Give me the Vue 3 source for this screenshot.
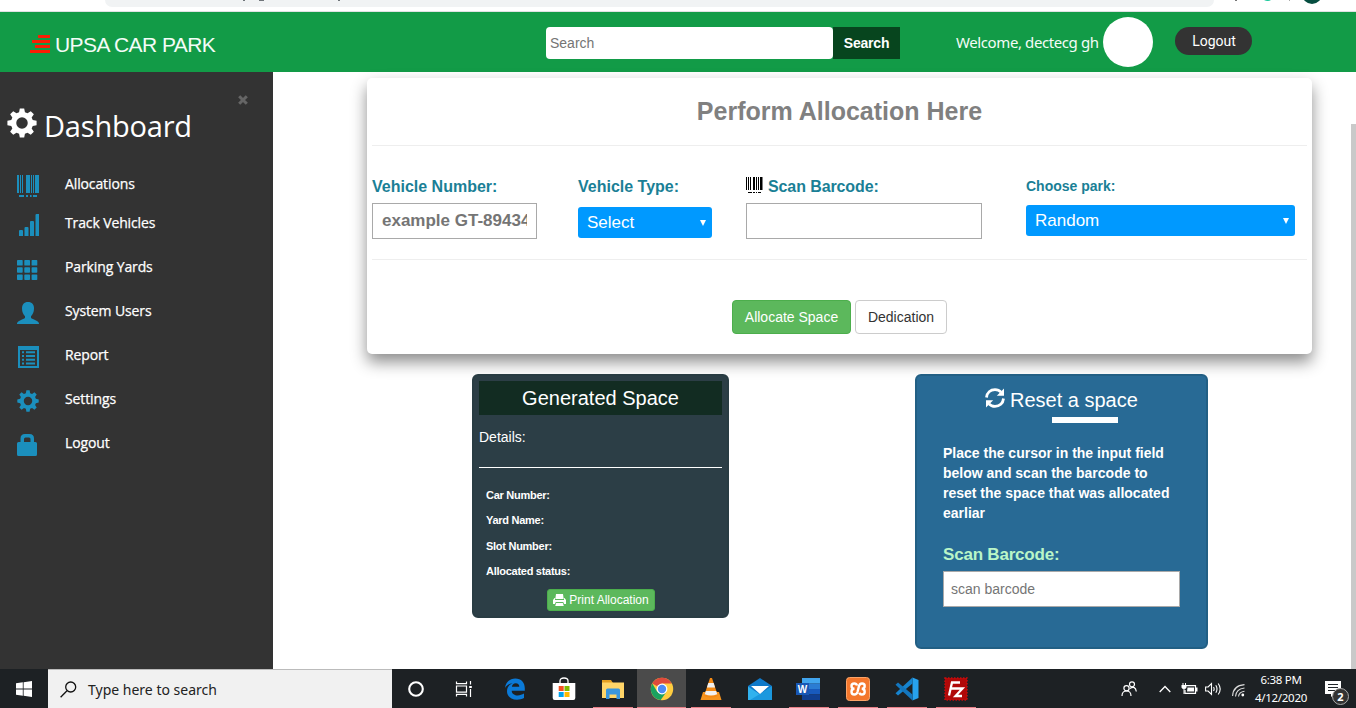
<script setup>
// Builds a closed outline for a toothed wheel with a round hub.
function gear(teeth, outer, inner, hub) {
  const pts = []
  const step = (Math.PI * 2) / teeth
  for (let i = 0; i < teeth; i++) {
    const a = i * step - Math.PI / 2
    for (const [off, r] of [[-0.34, inner], [-0.19, outer], [0.19, outer], [0.34, inner]]) {
      const t = a + off * step
      pts.push(`${(12 + r * Math.cos(t)).toFixed(2)} ${(12 + r * Math.sin(t)).toFixed(2)}`)
    }
  }
  return `M${pts.join('L')}Z M${12 - hub} 12a${hub} ${hub} 0 1 0 ${hub * 2} 0a${hub} ${hub} 0 1 0 ${-hub * 2} 0Z`
}
const gearPath = gear(8, 11.8, 8.9, 4.6)
const barcodePath =
  'M0 0h2v18H0zM3 0h1v18H3zM5 0h1v18H5zM9 0h4v18H9zM14 0h1v18h-1zM16 0h1v18h-1zM18 0h4v18h-4zM2 20h5v2H2zM9 20h2v2H9zM13 20h1.6v2H13zM16 20h4v2h-4z'

const items = [
  { label: 'Allocations', icon: 'barcode' },
  { label: 'Track Vehicles', icon: 'signal' },
  { label: 'Parking Yards', icon: 'grid' },
  { label: 'System Users', icon: 'user' },
  { label: 'Report', icon: 'list' },
  { label: 'Settings', icon: 'gear' },
  { label: 'Logout', icon: 'lock' }
]
const details = ['Car Number:', 'Yard Name:', 'Slot Number:', 'Allocated status:']
</script>

<template>
  <div class="screen">
    <div class="chrome">
      <div class="urlbar"><i class="desc a"></i><i class="desc b"></i><i class="desc c"></i></div>
      <svg class="ext" width="142" height="11" viewBox="0 0 142 11">
        <path d="M21 0h2v1h-2z" fill="#777" />
        <path d="M50 0h7q-3 2-7 0z" fill="#16c79a" />
        <path d="M75 0h1v1h-1z" fill="#aaa" />
        <circle cx="98" cy="-6" r="10" fill="#064e40" />
      </svg>
    </div>

    <header class="topbar">
      <svg class="bars" width="20" height="18" viewBox="0 0 20 18">
        <path d="M8 0h12v3H8zM2 5h18v3H2zM5 10h15v3H5zM0 15h20v3H0z" fill="#fb1d04" />
      </svg>
      <span class="brand">UPSA CAR PARK</span>
      <input class="search" placeholder="Search" />
      <button class="go">Search</button>
      <span class="welcome">Welcome, dectecg gh</span>
      <span class="avatar"></span>
      <button class="out">Logout</button>
    </header>

    <div class="body">
      <aside class="side">
        <svg class="close" width="10" height="10" viewBox="0 0 10 10">
          <path d="M1.200 1.200l7.600 7.600M8.800 1.200L1.200 8.800" stroke="#666" stroke-width="3" />
        </svg>
        <div class="dash">
          <svg width="30" height="30" viewBox="0 0 24 24"><path :d="gearPath" fill="#fff" fill-rule="evenodd" /></svg>
          <span>Dashboard</span>
        </div>
        <nav>
          <a v-for="it in items" :key="it.icon" :class="['item', it.icon]">
            <svg width="22" height="22" viewBox="0 0 22 22" fill="#1b8fbd">
              <path v-if="it.icon === 'barcode'" :d="barcodePath" />
              <path v-else-if="it.icon === 'signal'" d="M2 17q0-1 1-1h2q1 0 1 1v5H2zM7.500 14q0-1 1-1h2q1 0 1 1v8h-4zM13 8q0-1 1-1h2q1 0 1 1v14h-4zM18.500 1q0-1 1-1H22v22h-3.500z" />
              <g v-else-if="it.icon === 'grid'">
                <rect v-for="n in 9" :key="n" :x="((n - 1) % 3) * 7.3" :y="Math.floor((n - 1) / 3) * 7.2" width="5.700" height="5.600" rx=".7" />
              </g>
              <path v-else-if="it.icon === 'user'" d="M11 0c4 0 6 2.500 6 6.500 0 3.500-1.300 6-3 7.700v1.500c0 1.300 8 2.600 8 6V22H0v-.5c0-3.200 8-4.500 8-5.800v-1.500C6.300 12.500 5 10 5 6.500 5 2.500 7 0 11 0z" />
              <path v-else-if="it.icon === 'list'" fill-rule="evenodd" d="M1 0h21v22H1zM3 4v16h17V4zM5 5.300h2v2H5zM9 5.300h9v2H9zM5 9h2v2H5zM9 9h9v2H9zM5 12.700h2v2H5zM9 12.700h9v2H9zM5 16.400h2v2H5zM9 16.400h9v2H9z" />
              <path v-else-if="it.icon === 'gear'" :d="gearPath" transform="scale(.917)" fill-rule="evenodd" />
              <path v-else fill-rule="evenodd" d="M3.500 8V4.500Q3.500 0 8 0h4.500Q17 0 17 4.500V8h1.500Q20 8 20 9.500v11q0 1.500-1.500 1.500h-17Q0 22 0 20.500v-11Q0 8 1.500 8zM7 8h6.500V5q0-1.500-1.500-1.500H8.500Q7 3.500 7 5z" />
            </svg>
            <span>{{ it.label }}</span>
          </a>
        </nav>
      </aside>

      <main class="main">
        <section class="alloc">
          <h2>Perform Allocation Here</h2>
          <div class="fields">
            <div class="field f1">
              <label>Vehicle Number:</label>
              <input class="plain bold" placeholder="example GT-89434" />
            </div>
            <div class="field f2">
              <label>Vehicle Type:</label>
              <div class="select"><span>Select</span><i></i></div>
            </div>
            <div class="field f3">
              <label>
                <svg width="17" height="16" viewBox="0 0 17 16"><path d="M0 0h1v13H0zM2 0h1v13H2zM4 0h1v13H4zM7 0h2v13H7zM10 0h1v13h-1zM12 0h1v13h-1zM14 0h2.500v13H14zM2 15h4v1H2zM7 15h2v1H7zM10 15h1v1h-1zM12 15h3v1h-3z" /></svg>
                <span>Scan Barcode:</span>
              </label>
              <input class="plain" />
            </div>
            <div class="field f4">
              <label>Choose park:</label>
              <div class="select"><span>Random</span><i></i></div>
            </div>
          </div>
          <div class="actions">
            <button class="btn green">Allocate Space</button>
            <button class="btn white">Dedication</button>
          </div>
        </section>

        <div class="panels">
          <section class="gen">
            <h3>Generated Space</h3>
            <p class="details">Details:</p>
            <ul><li v-for="d in details" :key="d">{{ d }}</li></ul>
            <button class="print">
              <svg width="13" height="12" viewBox="0 0 13 12"><path fill="#fff" fill-rule="evenodd" d="M3 0h7l.7 5H2.300zM0 6l1.500-2H2v2h9V4h.5L13 6v4h-2L10.300 8H2.700L2 10H0zM3.200 9h6.600l1 3H2.200z" /></svg>
              <span>Print Allocation</span>
            </button>
          </section>

          <section class="reset">
            <div class="rtitle">
              <svg width="20" height="20" viewBox="0 0 20 20">
                <path d="M1.500 9.500C2 4.500 5.500 1.600 10 1.600c2.600 0 4.600 1 6 2.600M18.500 10.500c-.5 5-4 7.900-8.500 7.900-2.600 0-4.600-1-6-2.600" fill="none" stroke="#fff" stroke-width="2.800" />
                <path d="M19 .5v7.200h-7.200zM1 19.500v-7.200h7.200z" fill="#fff" />
              </svg>
              <span>Reset a space</span>
            </div>
            <div class="rule"></div>
            <p>Place the cursor in the input field<br />below and scan the barcode to<br />reset the space that was allocated<br />earliar</p>
            <label>Scan Barcode:</label>
            <input class="plain" placeholder="scan barcode" />
          </section>
        </div>
        <div class="scroll"></div>
      </main>
    </div>

    <footer class="task">
      <div class="start">
        <svg width="16" height="16" viewBox="0 0 16 16" fill="#fff"><path d="M0 2.300l6.800-1v6.200H0zM7.600 1.200L16 0v7.500H7.600zM0 8.400h6.800v6.300L0 13.700zM7.600 8.400H16V16l-8.400-1.200z" /></svg>
      </div>
      <div class="tsearch">
        <svg width="17" height="17" viewBox="0 0 17 17" fill="none" stroke="#111" stroke-width="1.300"><circle cx="10.700" cy="6" r="5" /><path d="M7 9.800L.6 16.200" /></svg>
        <span>Type here to search</span>
      </div>
      <div class="apps">
        <div class="app">
          <svg class="nudge" width="18" height="18" viewBox="0 0 18 18"><circle cx="9" cy="9" r="6.800" fill="none" stroke="#fff" stroke-width="2.100" /></svg>
        </div>
        <div class="app">
          <svg class="nudge2" width="18" height="18" viewBox="0 0 18 18" fill="none" stroke="#fff" stroke-width="1.200"><path d="M1.500 1.500v2.200h10V1.500M1.500 16.500v-2.200h10v2.200M1.500 6h10v6.200h-10zM15.500 1v3.500M15.500 9v8" /><path d="M14.200 6h2.600v2h-2.600z" fill="#fff" stroke="none" /></svg>
        </div>
        <div class="app">
          <svg width="22" height="22" viewBox="0 0 22 22"><path fill="#0b7ad8" d="M1 10C1.700 3.800 6 .4 11.300.4c6 0 9.500 4.100 9.500 9.800v2.500H7.700c.2 3.300 3 4.700 6 4.700 2.300 0 4.400-.6 6.300-1.800v4.500c-2.100 1.100-4.500 1.600-7 1.600C6.900 21.700 3 18.200 3 13.200c0-3.800 2-6.600 5.600-8C5 5.500 2.700 7.300 1 10zm6.900-1.200h7.400c0-2.300-1.300-3.600-3.500-3.600S8.200 6.500 7.900 8.800z" /></svg>
        </div>
        <div class="app">
          <svg width="24" height="24" viewBox="0 0 24 24"><path d="M8 7V4q0-3 4-3t4 3v3" fill="none" stroke="#fff" stroke-width="1.300" /><path d="M.7 6h22.600v15q0 2-2 2H2.700q-2 0-2-2z" fill="#fff" /><path d="M6.700 9h5v5h-5z" fill="#f25022" /><path d="M12.500 9h5v5h-5z" fill="#7fba00" /><path d="M6.700 15h5v5h-5z" fill="#00a4ef" /><path d="M12.500 15h5v5h-5z" fill="#ffb900" /></svg>
        </div>
        <div class="app open">
          <svg width="24" height="22" viewBox="0 0 24 22"><path d="M1 2h9l2 3H1z" fill="#e5a021" /><path d="M1 4.500h22V20H1z" fill="#ffd568" /><path d="M5 12q0-1.500 1.500-1.500h11Q19 10.500 19 12v9h-3.500v-4.500h-7V21H5z" fill="#3a96dd" /></svg>
        </div>
        <div class="app active">
          <svg width="24" height="24" viewBox="0 0 24 24"><circle cx="12" cy="12" r="11.200" fill="#ffcd40" /><path d="M12 12L2.300 6.400A11.200 11.200 0 0 1 21.700 6.400H12z" fill="#df4a3c" /><path d="M2.300 6.400A11.200 11.200 0 0 0 10.700 23.100L16.500 14.700 7.200 14.700z" fill="#1aa260" /><circle cx="12" cy="12" r="5.400" fill="#fff" /><circle cx="12" cy="12" r="4.200" fill="#4c8bf5" /></svg>
        </div>
        <div class="app open">
          <svg width="22" height="24" viewBox="0 0 22 24"><path d="M3 15h16l2.500 8H.5z" fill="#f7941d" /><path d="M10 1h2l6 18q-7 3-14 0z" fill="#f58a14" /><path d="M8.300 6h5.400l1.400 4.500H6.900zM5.800 14h10.400l1 3.200q-6.200 2.500-12.400 0z" fill="#f1f1f1" /></svg>
        </div>
        <div class="app">
          <svg width="26" height="24" viewBox="0 0 26 24"><path d="M1 9L13 1l12 8v14H1z" fill="#0f79c9" /><path d="M1 9.500l12 8 12-8V23H1z" fill="#31b2ee" /><path d="M3 23L25 9.500V23z" fill="#1b98de" /><path d="M4 9h18l-9 8z" fill="#fff" /></svg>
        </div>
        <div class="app open">
          <svg width="25" height="22" viewBox="0 0 25 22"><path d="M6 0h18v5.600H6z" fill="#41a5ee" /><path d="M6 5.500h18V11H6z" fill="#2b7cd3" /><path d="M6 11h18v5.500H6z" fill="#185abd" /><path d="M6 16.500h18V22H6z" fill="#103f91" /><path d="M0 5h13v12H0z" fill="#1857b4" /><text x="6.500" y="14.500" text-anchor="middle" class="w">W</text></svg>
        </div>
        <div class="app open">
          <svg width="24" height="24" viewBox="0 0 24 24"><rect x=".5" y=".5" width="23" height="23" rx="3" fill="#f4772c" stroke="#fca469" /><path d="M11 8.500Q10.500 6.500 8.300 6.500 5.500 6.500 5.500 9q0 2.800 3 2.800-3 0-3 2.900 0 2.800 2.800 2.800 2.400 0 3.200-2.500l1.500-6q.7-2.500 3-2.500 2.700 0 2.700 2.500 0 2.800-3 2.800 3 0 3 2.900 0 2.800-2.900 2.800-1.800 0-2.500-1.800" fill="none" stroke="#fff" stroke-width="2.400" /></svg>
        </div>
        <div class="app open">
          <svg width="24" height="24" viewBox="0 0 24 24"><path d="M17.500.5L23.500 3v18l-6 2.500z" fill="#27a2ee" /><path d="M17.500.5v6L3 18.500.5 16.300z" fill="#1684cf" /><path d="M17.500 23.500v-6L3 5.500.5 7.700z" fill="#1376be" /></svg>
        </div>
        <div class="app open">
          <svg width="24" height="24" viewBox="0 0 24 24"><rect x="1" y="1" width="22" height="22" fill="#b00808" stroke="#c50d0d" stroke-width="1.500" stroke-dasharray="1.500 1.500" /><path d="M5 18.500L8 5.500h8M6.500 11.500h5.500M12 11.500h6.500l-7 7.500h6.500" fill="none" stroke="#fff" stroke-width="2.300" /></svg>
        </div>
      </div>
      <div class="tray">
        <svg class="people" width="16" height="16" viewBox="0 0 16 16" fill="none" stroke="#fff" stroke-width="1.200"><circle cx="5.500" cy="7.300" r="2.600" /><path d="M1 15q0-5 4.500-5T10 15" /><circle cx="11" cy="3.300" r="2.500" /><path d="M8.800 7.500q5.700-3.200 6.500 3" /></svg>
        <svg class="up" width="12" height="8" viewBox="0 0 12 8" fill="none" stroke="#fff" stroke-width="1.300"><path d="M.7 7L6 1.500 11.300 7" /></svg>
        <svg class="bat" width="17" height="12" viewBox="0 0 17 12"><path d="M5 2.600h9.500v7.800H4V7" fill="none" stroke="#fff" stroke-width="1.200" /><path d="M6.500 4.500h6.500v4H6zM15 4.500h1.500v4H15zM1.500 0h1v2h-1zM4 0h1v2H4zM.5 2h5v2.500Q5 6 3 6T.5 4.500zM2.500 6h1v5h-1z" fill="#fff" /></svg>
        <svg class="vol" width="17" height="14" viewBox="0 0 17 14" fill="none" stroke="#fff" stroke-width="1.100"><path d="M.6 5h2.500L6.500 1.500v11L3.100 9H.6zM8.500 5q1.300 2 0 4M10.800 3.300q2.400 3.700 0 7.400M13.200 1.500q4 5.500 0 11" /></svg>
        <svg class="wifi" width="13" height="13" viewBox="0 0 13 13" fill="none" stroke="#ddd" stroke-width="1.100"><path d="M.6 12Q1 1.500 12.500.6M3.500 12.500Q4 5 12.500 4M6.500 12.500Q7 8 12.500 7.300" /><circle cx="10.800" cy="11" r="1.400" fill="#fff" stroke="none" /></svg>
        <div class="clock"><span>6:38 PM</span><span>4/12/2020</span></div>
        <div class="note">
          <svg width="16" height="16" viewBox="0 0 16 16"><path d="M0 0h16v13H9.500L6 16v-3H0z" fill="#fff" /><path d="M3 3.500h10M3 6.500h10M3 9.500h7" stroke="#20262a" stroke-width="1.100" /></svg>
          <b>2</b>
        </div>
      </div>
    </footer>
  </div>
</template>

<style>
body { margin: 0; overflow: hidden; }
</style>

<style scoped>
* { box-sizing: border-box; }
.screen { width: 1356px; height: 708px; display: flex; flex-direction: column; overflow: hidden; background: #fff; font: 14px "Liberation Sans", Arial, sans-serif; white-space: nowrap; }
button, input { font-family: inherit; margin: 0; border: 0; outline: 0; }
svg { display: block; flex: none; }

.chrome { height: 12px; flex: none; display: flex; border-bottom: 1px solid #dfe1e3; }
.urlbar { margin-left: 105px; width: 1109px; height: 7px; background: #f1f3f4; border-radius: 0 0 14px 14px; display: flex; }
.desc { height: 1px; background: #70757a; width: 2px; }
.desc.a { margin-left: 138px; }
.desc.b { margin-left: 14px; width: 5px; }
.desc.c { margin-left: 74px; width: 2px; }

.topbar { height: 60px; flex: none; background: #129b47; display: flex; align-items: flex-start; color: #fff; }
.bars { margin: 23px 0 0 30px; }
.brand { margin: 20px 0 0 5px; width: 491px; font: 21px/25px "Liberation Sans", Arial, sans-serif; letter-spacing: -.57px; color: #f4fcf7; }
.search { margin-top: 15px; width: 287px; height: 32px; border-radius: 4px; padding: 0 4px; font-size: 14px; background: #fff; }
.search::placeholder, .plain::placeholder { color: #757575; opacity: 1; }
.go { margin-top: 15px; width: 67px; height: 32px; background: #07451e; color: #fff; font: bold 14px "Liberation Sans", Arial, sans-serif; letter-spacing: -.2px; padding: 0; }
.welcome { margin: 20px 0 0 56px; width: 147px; font: 15px/20px "Noto Sans", sans-serif; letter-spacing: -.4px; color: #f4fcf7; }
.avatar { margin-top: 5px; width: 50px; height: 50px; border-radius: 50%; background: #fff; }
.out { margin: 15px 0 0 22px; width: 77px; height: 28px; border-radius: 14px; background: #333; color: #fff; font: 14px Roboto, sans-serif; padding: 0 0 0 1px; }

.body { height: 597px; flex: none; display: flex; }
.side { width: 273px; background: #333; color: #fff; font-family: "Open Sans", sans-serif; }
.close { margin: 23px 0 0 238px; }
.dash { height: 60px; padding: 3px 0 0 7px; display: flex; align-items: flex-start; }
.dash span { margin: -1px 0 0 7px; font-size: 29px; line-height: 38px; letter-spacing: -.2px; }
.item { display: flex; height: 44px; padding-left: 17px; align-items: flex-start; }
.item svg { margin-top: 10px; }
.item span { margin-left: 26px; font-size: 14px; letter-spacing: -.12px; line-height: 20px; padding-top: 9px; -webkit-text-stroke: .25px #fff; }
.item.barcode { height: 39px; }
.item.grid svg { margin-top: 12px; }

.main { position: relative; width: 1083px; padding: 6px 0 0 94px; }
.alloc { width: 945px; height: 276px; border-radius: 5px; background: #fff; padding: 0 5px; box-shadow: 0 8px 16px rgba(0, 0, 0, .45); }
.alloc h2 { margin: 0; height: 68px; padding-top: 17px; border-bottom: 1px solid #eee; text-align: center; font-size: 25px; line-height: 32px; color: #808080; }
.fields { display: flex; height: 114px; padding-top: 30px; border-bottom: 1px solid #eee; align-items: flex-start; }
.field label { display: flex; color: #1a7f96; font-weight: bold; font-size: 16px; line-height: 22px; height: 27px; }
.f1 { width: 206px; }
.f2 { width: 168px; }
.f3 { width: 280px; }
.f3 label svg { margin-top: 1px; }
.f3 label span { margin-left: 5px; letter-spacing: -.1px; }
.f4 label { font-size: 14px; line-height: 20px; }
.plain { display: block; height: 36px; border: 1px solid #a9a9a9; padding: 0 9px; background: #fff; font-size: 14px; }
.bold { font-size: 17px; font-weight: bold; width: 165px; }
.f3 .plain { width: 236px; }
.select { display: flex; align-items: center; justify-content: space-between; height: 31px; border-radius: 3px; background: #09f; color: #fff; font-size: 17px; padding: 0 6px 0 9px; }
.select i { border: 3px solid transparent; border-top: 6px solid #fff; border-bottom: 0; }
.f2 .select { width: 134px; margin-top: 4px; }
.f4 .select { width: 269px; margin-top: 2px; }
.actions { display: flex; justify-content: center; gap: 4px; padding-top: 40px; }
.btn { height: 34px; border-radius: 4px; font-size: 14px; padding: 0; }
.green { width: 119px; background: #5cb85c; border: 1px solid #4cae4c; color: #fff; }
.white { width: 92px; background: #fff; border: 1px solid #ccc; color: #333; }

.panels { display: flex; align-items: flex-start; margin: 20px 0 0 105px; position: relative; }
.gen { width: 257px; height: 244px; border: 2px solid #293c43; border-radius: 6px; background: #2c3e46; padding: 5px; color: #fff; }
.gen h3 { margin: 0; height: 34px; background: #122c22; text-align: center; font-weight: normal; font-size: 20px; line-height: 34px; }
.details { margin: 0; height: 53px; padding-top: 12px; line-height: 20px; border-bottom: 1px solid #fff; font-size: 14px; }
.gen ul { list-style: none; margin: 15px 0 0 7px; padding: 0; font-weight: bold; font-size: 11px; letter-spacing: -.27px; line-height: 25.300px; }
.print { display: flex; align-items: center; justify-content: center; gap: 3px; width: 108px; height: 22px; margin: 5px 0 0 68px; border: 1px solid #4cae4c; border-radius: 3px; background: #5cb85c; color: #fff; font-size: 12px; padding: 0; }
.reset { margin-left: 186px; width: 293px; height: 275px; border: 2px solid #225f84; border-radius: 6px; background: #286a95; color: #fff; padding: 12px 26px 0; }
.rtitle { display: flex; padding-left: 42px; height: 29px; }
.rtitle span { margin-left: 5px; font-size: 20px; line-height: 24px; }
.rule { width: 66px; height: 6px; margin-left: 109px; background: #fff; }
.reset p { margin: 20px 0 0; font-weight: bold; font-size: 14px; line-height: 20px; }
.reset label { display: block; margin-top: 21px; height: 27px; line-height: 22px; font-size: 17px; letter-spacing: -.2px; font-weight: bold; color: #baf5c8; }
.reset .plain { width: 237px; padding: 0 7px; }
.scroll { position: absolute; right: 0; top: 52px; width: 5px; height: 545px; background: #c9c9c9; }

.task { height: 39px; flex: none; background: #1d2124; display: flex; color: #fff; font-family: "Noto Sans", sans-serif; }
.start { width: 48px; padding: 12px 0 0 16px; }
.tsearch { width: 344px; background: #f1f1f1; border-top: 1px solid #bbb; display: flex; padding: 11px 0 0 12px; color: #222; }
.tsearch span { margin-left: 11px; font-size: 14px; line-height: 18px; }
.apps { display: flex; width: 590px; }
.app { width: 49px; height: 39px; display: flex; align-items: center; justify-content: center; border-bottom: 1px solid transparent; }
.app svg { margin-top: 1px; }
.nudge { margin-right: 1px; }
.nudge2 { margin-right: 3px; }
.open { background: linear-gradient(#e88088, #e88088) center bottom / 40px 1px no-repeat border-box; }
.active { background: #4b4b4b; border-bottom-color: #e88088; }
.w { font: bold 10px "Liberation Sans", sans-serif; fill: #fff; }
.tray { display: flex; padding-left: 139px; }
.people { margin-top: 12px; }
.up { margin: 16px 0 0 22px; }
.bat { margin: 14px 0 0 10px; }
.vol { margin: 13px 0 0 7px; }
.wifi { margin: 15px 0 0 10px; }
.clock { width: 60px; margin-left: 6px; padding-top: 2px; display: flex; flex-direction: column; align-items: center; font-size: 11.500px; line-height: 18px; letter-spacing: -.3px; }
.note { position: relative; margin: 12px 0 0 14px; }
.note b { position: absolute; left: 7px; top: 7px; width: 17px; height: 17px; border: 1px solid #aaa; border-radius: 50%; background: #333; font-size: 11px; line-height: 15px; text-align: center; }
</style>
